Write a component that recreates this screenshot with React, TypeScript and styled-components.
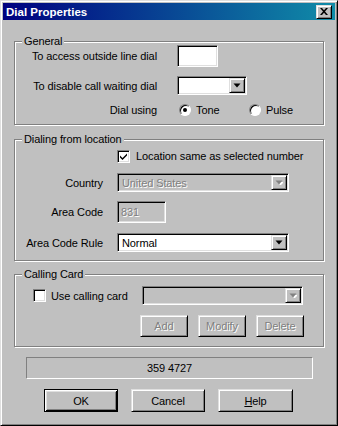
import React from "react";
import styled, { createGlobalStyle, css } from "styled-components";

const Global = createGlobalStyle`
  html, body { margin: 0; padding: 0; background: #c0c0c0; }
  body { font-family: "Liberation Sans", Arial, sans-serif; font-size: 11px; letter-spacing: -0.1px; color: #000; }
  * { box-sizing: border-box; }
`;

const disabledText = css`
  color: #808080;
  text-shadow: 1px 1px 0 #fff;
`;

const sunken = css`
  border-style: solid;
  border-width: 1px;
  border-color: #808080 #fff #fff #808080;
  box-shadow: inset 1px 1px 0 #000, inset -1px -1px 0 #dfdfdf;
`;

const raised = css`
  border-style: solid;
  border-width: 1px;
  border-color: #dfdfdf #000 #000 #dfdfdf;
  box-shadow: inset 1px 1px 0 #fff, inset -1px -1px 0 #808080;
`;

const Window = styled.div`
  width: 338px;
  height: 426px;
  background: #c0c0c0;
  border-style: solid;
  border-width: 1px;
  border-color: #dfdfdf #000 #000 #dfdfdf;
  box-shadow: inset 1px 1px 0 #fff, inset -1px -1px 0 #808080;
  padding: 2px;
  display: flex;
  flex-direction: column;
`;

const TitleBar = styled.div`
  height: 17px;
  flex-shrink: 0;
  display: flex;
  align-items: center;
  justify-content: space-between;
  padding: 0 3px 0 3px;
  background: linear-gradient(to right, #000080, #108ca8);
  color: #fff;
  font-weight: bold;
  font-size: 11.5px;
  letter-spacing: 0;
`;

const CloseButton = styled.div`
  width: 16px;
  height: 14px;
  background: #c0c0c0;
  ${raised};
  display: flex;
  align-items: center;
  justify-content: center;
`;

const GroupBox = styled.div<{ $top: number; $height: number }>`
  margin: ${(p) => p.$top}px 11px 0;
  height: ${(p) => p.$height}px;
  flex-shrink: 0;
  border: 1px solid #808080;
  box-shadow: inset 1px 1px 0 #fff, 1px 1px 0 #fff;
  display: flex;
  flex-direction: column;
`;

const Caption = styled.div`
  align-self: flex-start;
  margin: -8px 0 -3px 7px;
  padding: 0 2px;
  line-height: 14px;
  background: #c0c0c0;
`;

const Row = styled.div<{ $mt: number; $h: number; $pl?: number; $gap?: number }>`
  display: flex;
  align-items: center;
  height: ${(p) => p.$h}px;
  margin-top: ${(p) => p.$mt}px;
  padding-left: ${(p) => p.$pl ?? 0}px;
  gap: ${(p) => p.$gap ?? 0}px;
  flex-shrink: 0;
`;

const Label = styled.span<{ $w: number; $mr: number }>`
  width: ${(p) => p.$w}px;
  margin-right: ${(p) => p.$mr}px;
  text-align: right;
  flex-shrink: 0;
  white-space: nowrap;
`;

const TextBox = styled.div<{ $w: number; $disabled?: boolean }>`
  width: ${(p) => p.$w}px;
  height: 100%;
  ${sunken};
  background: ${(p) => (p.$disabled ? "#c0c0c0" : "#fff")};
  padding: 2px 0 0 3px;
  line-height: 16px;
  ${(p) => p.$disabled && disabledText};
`;

const ComboBox = styled.div<{ $w: number; $disabled?: boolean }>`
  width: ${(p) => p.$w}px;
  height: 100%;
  ${sunken};
  background: ${(p) => (p.$disabled ? "#c0c0c0" : "#fff")};
  display: flex;
  align-items: stretch;
  padding: 1px;
  flex-shrink: 0;
`;

const ComboText = styled.span<{ $disabled?: boolean }>`
  flex: 1;
  display: flex;
  align-items: center;
  padding-left: 3px;
  white-space: nowrap;
  ${(p) => p.$disabled && disabledText};
`;

const DropButton = styled.div`
  width: 16px;
  flex-shrink: 0;
  background: #c0c0c0;
  ${raised};
  display: flex;
  align-items: center;
  justify-content: center;
`;

const CheckBox = styled.div<{ $ml: number }>`
  width: 13px;
  height: 13px;
  margin-left: ${(p) => p.$ml}px;
  flex-shrink: 0;
  ${sunken};
  background: #fff;
  display: flex;
  align-items: center;
  justify-content: center;
`;

const CheckText = styled.span<{ $w?: number; $ml: number }>`
  margin-left: ${(p) => p.$ml}px;
  ${(p) => (p.$w ? `width: ${p.$w}px;` : "")}
  flex-shrink: 0;
  white-space: nowrap;
`;

const RadioOption = styled.div<{ $w?: number }>`
  display: flex;
  align-items: center;
  gap: 5px;
  ${(p) => (p.$w ? `width: ${p.$w}px;` : "")}
  flex-shrink: 0;
`;

const RadioCircle = styled.div`
  width: 12px;
  height: 12px;
  border-radius: 50%;
  border-style: solid;
  border-width: 1px;
  border-color: #808080 #fff #fff #808080;
  box-shadow: inset 1px 1px 0 #000;
  background: #fff;
  display: flex;
  align-items: center;
  justify-content: center;
`;

const RadioDot = styled.div`
  width: 4px;
  height: 4px;
  border-radius: 50%;
  background: #000;
`;

const PushButton = styled.div<{ $w: number; $h: number; $default?: boolean; $disabled?: boolean }>`
  width: ${(p) => p.$w}px;
  height: ${(p) => p.$h}px;
  background: #c0c0c0;
  display: flex;
  align-items: center;
  justify-content: center;
  flex-shrink: 0;
  ${(p) =>
    p.$default
      ? css`
          border: 1px solid #000;
          box-shadow: inset 1px 1px 0 #fff, inset -1px -1px 0 #000, inset 2px 2px 0 #dfdfdf,
            inset -2px -2px 0 #808080;
        `
      : raised};
  ${(p) => p.$disabled && disabledText};
`;

const StatusField = styled.div`
  margin: 10px 0 0 23px;
  width: 287px;
  height: 22px;
  flex-shrink: 0;
  border-style: solid;
  border-width: 1px;
  border-color: #808080 #fff #fff #808080;
  display: flex;
  align-items: center;
  justify-content: center;
`;

const ButtonRow = styled.div`
  display: flex;
  gap: 13px;
  margin: 10px 0 0 41px;
  flex-shrink: 0;
`;

const Arrow = ({ disabled }: { disabled?: boolean }) => (
  <svg width="8" height="5" viewBox="0 0 8 5">
    {disabled && <path d="M2 2h7l-3.5 3.5z" fill="#fff" />}
    <path d="M0.5 0.5h7L4 4.5z" fill={disabled ? "#808080" : "#000"} />
  </svg>
);

const Combo = ({ w, text, disabled }: { w: number; text?: string; disabled?: boolean }) => (
  <ComboBox $w={w} $disabled={disabled}>
    <ComboText $disabled={disabled}>{text}</ComboText>
    <DropButton>
      <Arrow disabled={disabled} />
    </DropButton>
  </ComboBox>
);

const CheckMark = () => (
  <svg width="9" height="9" viewBox="0 0 9 9">
    <path d="M1 3.5 L3.5 6 L8 1.5 V3.5 L3.5 8 L1 5.5 Z" fill="#000" />
  </svg>
);

export default function App() {
  return (
    <>
      <Global />
      <Window>
        <TitleBar>
          <span>Dial Properties</span>
          <CloseButton>
            <svg width="8" height="7" viewBox="0 0 8 7">
              <path d="M0 0h2l2 2.3L6 0h2L5 3.5 8 7H6L4 4.7 2 7H0l3-3.5z" fill="#000" />
            </svg>
          </CloseButton>
        </TitleBar>

        <GroupBox $top={21} $height={84}>
          <Caption>General</Caption>
          <Row $mt={0} $h={22}>
            <Label $w={142} $mr={20}>To access outside line dial</Label>
            <TextBox $w={41} />
          </Row>
          <Row $mt={9} $h={19}>
            <Label $w={142} $mr={20}>To disable call waiting dial</Label>
            <Combo w={70} />
          </Row>
          <Row $mt={6} $h={18}>
            <Label $w={142} $mr={22}>Dial using</Label>
            <RadioOption $w={70}>
              <RadioCircle>
                <RadioDot />
              </RadioCircle>
              <span>Tone</span>
            </RadioOption>
            <RadioOption>
              <RadioCircle />
              <span>Pulse</span>
            </RadioOption>
          </Row>
        </GroupBox>

        <GroupBox $top={14} $height={122}>
          <Caption>Dialing from location</Caption>
          <Row $mt={4} $h={18}>
            <CheckBox $ml={102}>
              <CheckMark />
            </CheckBox>
            <CheckText $ml={6}>Location same as selected number</CheckText>
          </Row>
          <Row $mt={8} $h={19}>
            <Label $w={88} $mr={14}>Country</Label>
            <Combo w={172} text="United States" disabled />
          </Row>
          <Row $mt={9} $h={22}>
            <Label $w={88} $mr={14}>Area Code</Label>
            <TextBox $w={49} $disabled>831</TextBox>
          </Row>
          <Row $mt={10} $h={19}>
            <Label $w={88} $mr={14}>Area Code Rule</Label>
            <Combo w={172} text="Normal" />
          </Row>
        </GroupBox>

        <GroupBox $top={13} $height={73}>
          <Caption>Calling Card</Caption>
          <Row $mt={8} $h={19}>
            <CheckBox $ml={18} />
            <CheckText $ml={5} $w={91}>Use calling card</CheckText>
            <Combo w={161} disabled />
          </Row>
          <Row $mt={10} $h={22} $pl={125} $gap={10}>
            <PushButton $w={48} $h={22} $disabled>Add</PushButton>
            <PushButton $w={48} $h={22} $disabled>Modify</PushButton>
            <PushButton $w={48} $h={22} $disabled>Delete</PushButton>
          </Row>
        </GroupBox>

        <StatusField>359 4727</StatusField>

        <ButtonRow>
          <PushButton $w={74} $h={23} $default>OK</PushButton>
          <PushButton $w={74} $h={23}>Cancel</PushButton>
          <PushButton $w={75} $h={23}>
            <span>
              <u>H</u>elp
            </span>
          </PushButton>
        </ButtonRow>
      </Window>
    </>
  );
}
